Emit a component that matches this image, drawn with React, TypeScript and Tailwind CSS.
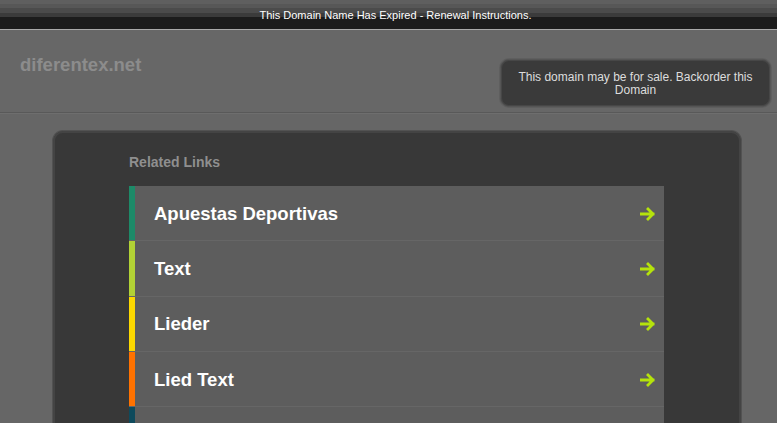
const links = [
  { label: 'Apuestas Deportivas', color: 'bg-[#1d8a68]' },
  { label: 'Text', color: 'bg-[#b2d235]' },
  { label: 'Lieder', color: 'bg-[#fcd800]' },
  { label: 'Lied Text', color: 'bg-[#ff7200]' },
  { label: 'Songtexte', color: 'bg-[#0e4a5c]' },
]

function Arrow() {
  return (
    <svg width="16" height="14" viewBox="0 0 16 14" className="shrink-0">
      <path d="M1 7h12M8 2l5 5-5 5" fill="none" stroke="#b5e30b" strokeWidth="2.8" strokeLinecap="square" />
    </svg>
  )
}

export default function App() {
  return (
    <div className="h-[423px] overflow-hidden bg-[#666666] font-['Liberation_Sans',Arial,sans-serif]">
      <div className="flex h-[29px] flex-col">
        <div className="h-[4px] bg-[#5f5f5f]" />
        <div className="h-[4px] bg-[#575757]" />
        <div className="h-[5px] bg-[#4b4b4b]" />
        <div className="h-[4px] bg-[#3b3b3b]" />
        <div className="flex-1 bg-[#1c1c1c]" />
      </div>
      <div className="-mt-[29px] flex h-[29px] items-center justify-center pl-[14px] pt-[1px] text-[11px] text-white">
        This Domain Name Has Expired - Renewal Instructions.
      </div>
      <div className="h-[1px] bg-[#aaaaaa]" />
      <header className="flex h-[83px] items-start justify-between border-b border-[#595959] bg-[#676767] pl-[20px] pr-[6px]">
        <div className="pt-[21px] text-[18.5px] font-bold text-[#8c8c8c]">diferentex.net</div>
        <div className="mt-[29px] flex h-[48px] w-[271px] items-center justify-center rounded-[9px] border border-[#555] bg-[#3a3a3a] px-2 pt-[2px] text-center text-[12px] leading-[13px] text-[#dddddd] shadow-[inset_0_0_0_1px_#474747,0_0_0_1px_#5e5e5e]">
          This domain may be for sale. Backorder this Domain
        </div>
      </header>
      <div className="h-[1px] bg-[#6e6e6e]" />
      <main className="mx-[52px] mt-[16px] w-[690px] rounded-t-[11px] border-x border-t border-[#525252] bg-[#383838] pb-10 shadow-[inset_0_0_0_2px_#444444]">
        <div className="pl-[76px] pt-[21px]">
          <div className="text-[14px] font-bold text-[#8f8f8f]">Related Links</div>
          <ul className="mt-[13px] w-[535px]">
            {links.map((l) => (
              <li key={l.label} className="flex h-[55.3px] border-b border-[#666666] bg-[#5d5d5d]">
                <div className={`w-[6px] ${l.color}`} />
                <div className="flex flex-1 items-center justify-between pl-[19px] pr-[8px] pt-[1px]">
                  <span className="text-[18.5px] font-bold text-white">{l.label}</span>
                  <Arrow />
                </div>
              </li>
            ))}
          </ul>
        </div>
      </main>
    </div>
  )
}
